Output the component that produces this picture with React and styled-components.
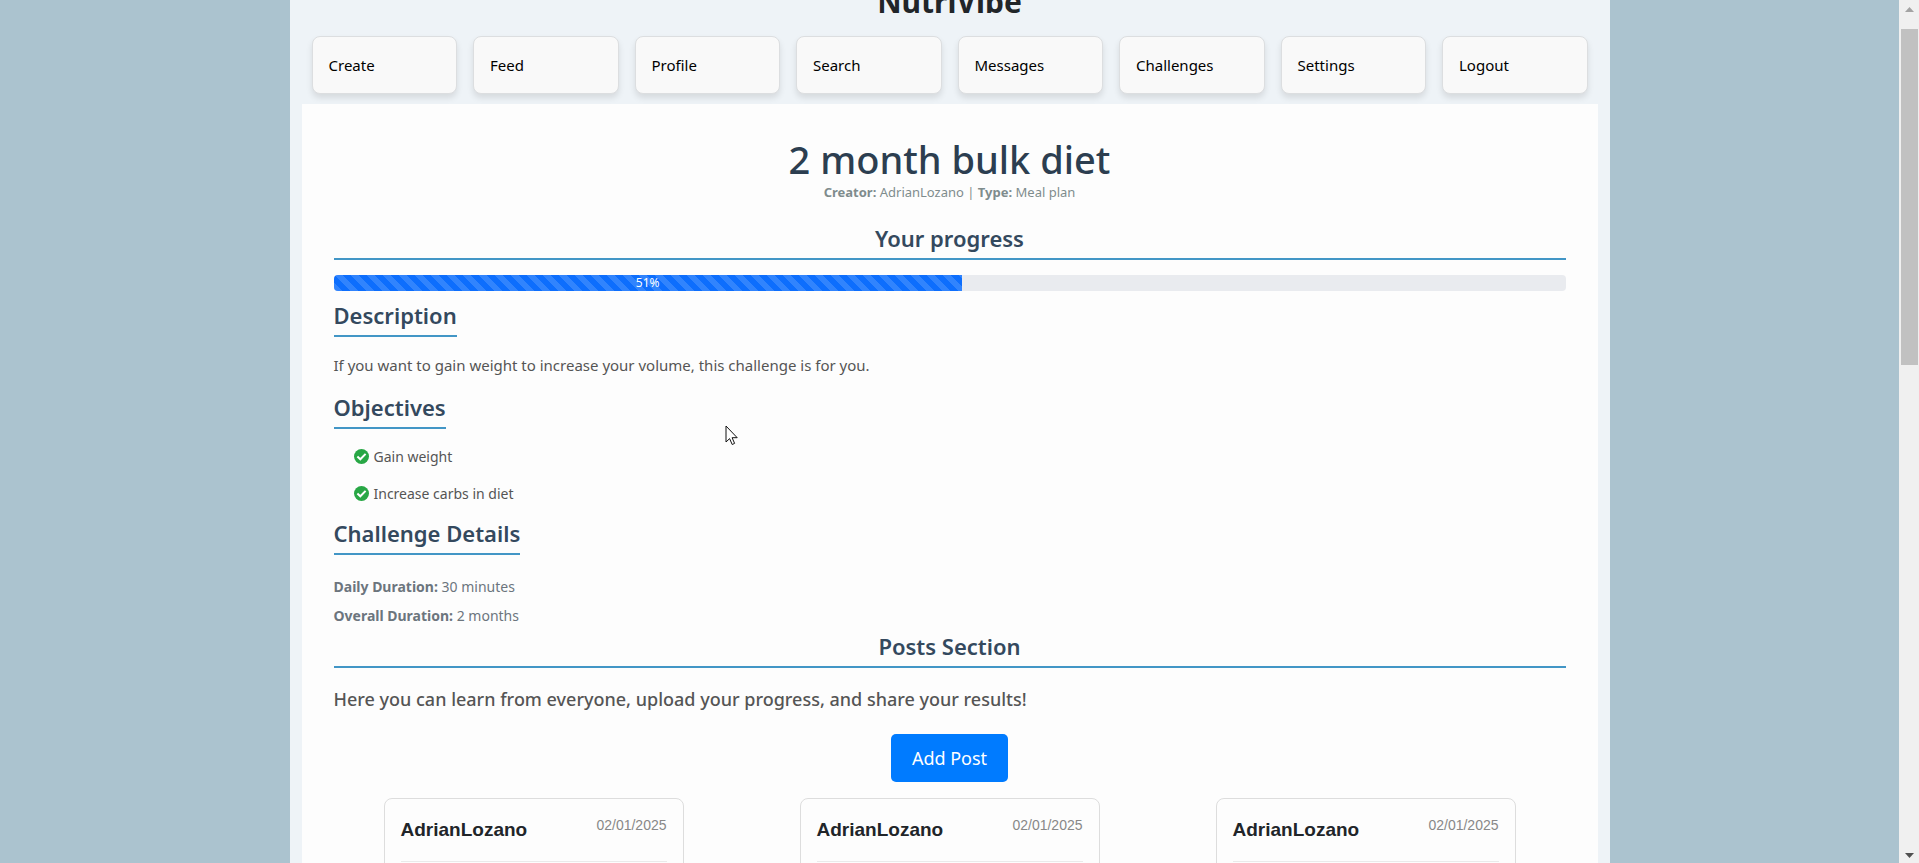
import React from "react";
import styled, { createGlobalStyle, css } from "styled-components";

const GlobalStyle = createGlobalStyle`
  *, *::before, *::after { box-sizing: border-box; }
  body {
    margin: 0;
    background: #abc3cf;
    color: #212529;
    font-family: "Segoe UI", "Noto Sans", sans-serif;
    font-size: 15px;
    line-height: 24px;
  }
  h1, h2, h3, p, ul { margin: 0; padding: 0; }
`;

const Viewport = styled.div`
  display: flex;
  height: 100vh;
  overflow: hidden;
`;

const Scroller = styled.div`
  flex: 1;
  min-width: 0;
  overflow: hidden;
`;

const Container = styled.div`
  max-width: 1320px;
  min-height: 100%;
  margin: 0 auto;
  padding: 0 12px;
  background: #eef3f7;
`;

const Brand = styled.h1`
  margin: -18px 0 14px;
  font-size: 30px;
  line-height: 40px;
  font-weight: 700;
  text-align: center;
`;

const Nav = styled.nav`
  display: grid;
  grid-template-columns: repeat(8, 1fr);
  gap: 16px;
  padding: 0 10px 10px;
`;

const NavCard = styled.a`
  padding: 16px;
  border: 1px solid #dcdee0;
  border-radius: 8px;
  background: #f9f9f9;
  box-shadow: 0 4px 6px rgba(0, 0, 0, 0.1);
  color: #000;
  text-decoration: none;
`;

const Panel = styled.main`
  padding: 32px;
  background: #fdfdfd;
`;

const Title = styled.h2`
  color: #2c3e50;
  font-size: 38px;
  line-height: 46px;
  font-weight: 500;
  text-align: center;
`;

const Meta = styled.p`
  margin-bottom: 22px;
  color: #7f8c8d;
  font-size: 13px;
  line-height: 20px;
  text-align: center;
`;

const SectionTitle = styled.h3`
  width: fit-content;
  padding-bottom: 6px;
  border-bottom: 2px solid #4296c6;
  color: #34495e;
  font-size: 22px;
  line-height: 28px;
  font-weight: 600;
  ${(p) =>
    p.$wide &&
    css`
      width: 100%;
      text-align: center;
    `}
`;

const Track = styled.div`
  height: 16px;
  margin: 15px 0 10px;
  border-radius: 4px;
  background: #e9ebef;
  overflow: hidden;
`;

const Fill = styled.div`
  height: 100%;
  background-color: #0d6efd;
  background-image: linear-gradient(
    45deg,
    rgba(255, 255, 255, 0.15) 25%,
    transparent 25%,
    transparent 50%,
    rgba(255, 255, 255, 0.15) 50%,
    rgba(255, 255, 255, 0.15) 75%,
    transparent 75%,
    transparent
  );
  background-size: 16px 16px;
  color: #fff;
  font-size: 12px;
  line-height: 16px;
  text-align: center;
`;

const Description = styled.p`
  margin: 16px 0;
  color: #555;
`;

const Objectives = styled.ul`
  margin: 9px 0 7px;
  padding-left: 20px;
  list-style: none;
`;

const Objective = styled.li`
  display: flex;
  align-items: center;
  gap: 5px;
  height: 37px;
  color: #555;
  font-size: 14px;
`;

const Details = styled.div`
  margin: 17px 0 2px;
  color: #6c757d;
  font-size: 14px;
`;

const Detail = styled.p`
  line-height: 29px;
`;

const Lead = styled.p`
  margin: 18px 0 22px;
  color: #555;
  font-size: 18px;
  line-height: 26px;
  font-weight: 500;
`;

const AddButton = styled.button`
  display: block;
  margin: 0 auto 16px;
  padding: 9px 21px;
  border: 0;
  border-radius: 5px;
  background: #007bff;
  color: #fff;
  font-family: inherit;
  font-size: 18px;
  line-height: 30px;
`;

const Posts = styled.div`
  display: grid;
  grid-template-columns: repeat(3, 1fr);
  gap: 16px;
  justify-items: center;
`;

const PostCard = styled.article`
  width: 300px;
  min-height: 240px;
  padding: 16px;
  border: 1px solid #ddd;
  border-radius: 8px;
  font-family: Arial, "Liberation Sans", sans-serif;
`;

const PostHeader = styled.header`
  display: flex;
  justify-content: space-between;
  height: 47px;
  border-bottom: 1px solid #eaeaea;
`;

const Author = styled.h3`
  margin-top: 3px;
  font-size: 19px;
  line-height: 24px;
  font-weight: 700;
`;

const PostDate = styled.time`
  color: #888;
  font-size: 14px;
  line-height: 20px;
`;

const ScrollBar = styled.div`
  display: flex;
  flex-direction: column;
  align-items: center;
  justify-content: space-between;
  width: 20px;
  padding: 7px 1px 5px 2px;
  background: #f0f0f0;
`;

const ScrollThumb = styled.div`
  flex: 0 0 336px;
  width: 100%;
  margin: 17px 0 auto;
  background: #c1c1c1;
`;

const Cursor = styled.svg`
  position: fixed;
  left: 725px;
  top: 425px;
`;

const CheckIcon = () => (
  <svg width="15" height="15" viewBox="0 0 15 15" aria-hidden="true">
    <circle cx="7.5" cy="7.5" r="7.5" fill="#28a745" />
    <path d="M3.4 7.6 6.3 10.3 11.6 4.9" fill="none" stroke="#fff" strokeWidth="2" />
  </svg>
);

const links = ["Create", "Feed", "Profile", "Search", "Messages", "Challenges", "Settings", "Logout"];
const objectives = ["Gain weight", "Increase carbs in diet"];
const posts = [1, 2, 3].map((id) => ({ id, author: "AdrianLozano", date: "02/01/2025" }));
const progress = 51;

export default function App() {
  return (
    <Viewport>
      <GlobalStyle />
      <Scroller>
        <Container>
          <Brand>NutriVibe</Brand>
          <Nav>
            {links.map((label) => (
              <NavCard key={label} href={`#${label.toLowerCase()}`}>
                {label}
              </NavCard>
            ))}
          </Nav>
          <Panel>
            <Title>2 month bulk diet</Title>
            <Meta>
              <strong>Creator:</strong> AdrianLozano | <strong>Type:</strong> Meal plan
            </Meta>

            <SectionTitle $wide>Your progress</SectionTitle>
            <Track
              role="progressbar"
              aria-label="Your progress"
              aria-valuenow={progress}
              aria-valuemin={0}
              aria-valuemax={100}
            >
              <Fill style={{ width: `${progress}%` }}>{progress}%</Fill>
            </Track>

            <SectionTitle>Description</SectionTitle>
            <Description>
              If you want to gain weight to increase your volume, this challenge is for you.
            </Description>

            <SectionTitle>Objectives</SectionTitle>
            <Objectives>
              {objectives.map((text) => (
                <Objective key={text}>
                  <CheckIcon />
                  {text}
                </Objective>
              ))}
            </Objectives>

            <SectionTitle>Challenge Details</SectionTitle>
            <Details>
              <Detail>
                <strong>Daily Duration:</strong> 30 minutes
              </Detail>
              <Detail>
                <strong>Overall Duration:</strong> 2 months
              </Detail>
            </Details>

            <SectionTitle $wide>Posts Section</SectionTitle>
            <Lead>Here you can learn from everyone, upload your progress, and share your results!</Lead>
            <AddButton type="button">Add Post</AddButton>
            <Posts>
              {posts.map((post) => (
                <PostCard key={post.id}>
                  <PostHeader>
                    <Author>{post.author}</Author>
                    <PostDate>{post.date}</PostDate>
                  </PostHeader>
                </PostCard>
              ))}
            </Posts>
          </Panel>
        </Container>
      </Scroller>
      <ScrollBar aria-hidden="true">
        <svg width="9" height="5" viewBox="0 0 9 5">
          <path d="M0 5 4.5 0 9 5Z" fill="#a3a3a3" />
        </svg>
        <ScrollThumb />
        <svg width="9" height="5" viewBox="0 0 9 5">
          <path d="M0 0 4.5 5 9 0Z" fill="#505050" />
        </svg>
      </ScrollBar>
      <Cursor width="13" height="21" viewBox="0 0 13 21" aria-hidden="true">
        <path
          d="M1 1V17L4.6 13.6 7.2 19.5 9.6 18.4 7.1 12.7H12.2Z"
          fill="#fff"
          stroke="#111"
          strokeWidth="1"
        />
      </Cursor>
    </Viewport>
  );
}
